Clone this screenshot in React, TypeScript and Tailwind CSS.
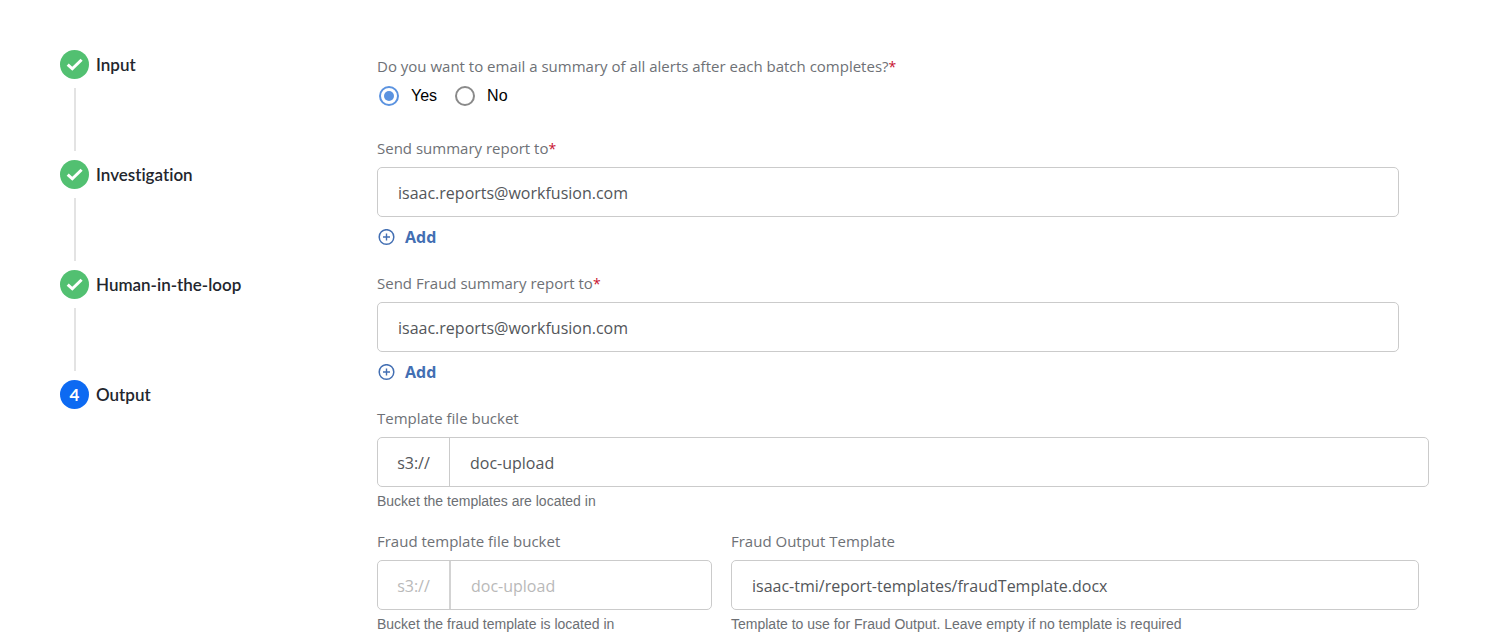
import { useState } from "react";

const STEPS = [
  { label: "Input", done: true },
  { label: "Investigation", done: true },
  { label: "Human-in-the-loop", done: true },
  { label: "Output", done: false },
];

const LABEL = "block text-[15px] leading-[22px] text-[#6e7176]";
const HELP = "mt-1 font-['Liberation_Sans',sans-serif] text-sm leading-5 text-[#6c6f74]";
const BOXED_INPUT =
  "mt-2 block h-[50px] w-full rounded-[5px] border border-[#cbcbcb] px-5 pt-[2px] text-base text-[#53565a] outline-none";
const BARE_INPUT =
  "h-full w-full min-w-0 bg-transparent px-5 pt-[2px] text-base text-[#53565a] outline-none placeholder:text-[#b9b9b9]";

function StepMarker({ done, number }: { done: boolean; number: number }) {
  if (!done) {
    return (
      <span className="flex size-[29px] items-center justify-center rounded-full bg-[#0d6af2] text-[17px] font-bold text-white">
        {number}
      </span>
    );
  }
  return (
    <span className="flex size-[29px] items-center justify-center rounded-full bg-[#52c071]">
      <svg width="29" height="29" viewBox="0 0 29 29" fill="none" aria-hidden="true">
        <path d="M7.7 14.6 L12.3 18.8 L21.6 9.7" stroke="#fff" strokeWidth="3" />
      </svg>
    </span>
  );
}

function Stepper() {
  return (
    <nav aria-label="Steps" className="w-[317px] shrink-0 font-[Lato,sans-serif]">
      <ol>
        {STEPS.map((step, i) => (
          <li key={step.label}>
            <div className="flex items-center gap-[7px]">
              <StepMarker done={step.done} number={i + 1} />
              <span className="pt-px text-[17px] leading-6 font-semibold text-[#23262d] [font-variant-ligatures:none]">
                {step.label}
              </span>
            </div>
            {i < STEPS.length - 1 && <div className="my-[9px] ml-[14px] h-[63px] w-[2px] bg-[#e3e3e3]" />}
          </li>
        ))}
      </ol>
    </nav>
  );
}

function Required() {
  return <span className="text-sm leading-none text-[#c8102e]">*</span>;
}

function EmailField({ id, label }: { id: string; label: string }) {
  return (
    <div className="mb-[23px] pr-[30px]">
      <label htmlFor={id} className={LABEL}>
        {label}
        <Required />
      </label>
      <input id={id} type="email" defaultValue="isaac.reports@workfusion.com" className={BOXED_INPUT} />
      <button type="button" className="mt-2 flex h-6 items-center gap-[10px] pl-px text-base font-bold text-[#436fb3]">
        <svg width="17" height="17" viewBox="0 0 17 17" fill="none" stroke="currentColor" aria-hidden="true">
          <circle cx="8.5" cy="8" r="7.3" strokeWidth="1.5" />
          <path d="M8.5 4.5v7M5 8h7" strokeWidth="1.4" />
        </svg>
        Add
      </button>
    </div>
  );
}

type BucketFieldProps = {
  id: string;
  label: string;
  help: string;
  value?: string;
  placeholder?: string;
};

function BucketField({ id, label, help, value, placeholder }: BucketFieldProps) {
  return (
    <>
      <label htmlFor={id} className={LABEL}>
        {label}
      </label>
      <div className="mt-2 flex h-[50px] items-center rounded-[5px] border border-[#cbcbcb]">
        <span
          className={
            value
              ? "flex h-full w-[72px] shrink-0 items-center justify-center border-r border-[#cbcbcb] pt-[2px] text-base text-[#53565a]"
              : "flex h-full w-[73px] shrink-0 items-center justify-center border-r-2 border-[#d3d3d3] pt-[2px] text-base text-[#b9b9b9]"
          }
        >
          s3://
        </span>
        <input id={id} type="text" defaultValue={value} placeholder={placeholder} className={BARE_INPUT} />
      </div>
      <p className={HELP}>{help}</p>
    </>
  );
}

function EmailChoice() {
  const [choice, setChoice] = useState("Yes");
  return (
    <fieldset className="mb-[29px]">
      <legend className={LABEL}>
        Do you want to email a summary of all alerts after each batch completes?
        <Required />
      </legend>
      <div className="mt-[7px] flex gap-[18px] pl-[2px] font-['Liberation_Sans',sans-serif] text-base leading-6 text-black">
        {["Yes", "No"].map((option) => (
          <label key={option} className="flex items-center gap-3">
            <input
              type="radio"
              name="email-summary"
              value={option}
              checked={choice === option}
              onChange={() => setChoice(option)}
              className="grid size-5 appearance-none place-content-center rounded-full border-2 border-[#8a8a8a] before:size-[10px] before:rounded-full before:bg-transparent checked:border-[#5b93e0] checked:before:bg-[#5b93e0]"
            />
            {option}
          </label>
        ))}
      </div>
    </fieldset>
  );
}

export default function App() {
  return (
    <main className="flex min-h-screen bg-white pr-[73px] pl-[60px] font-['Open_Sans',sans-serif]">
      <div className="pt-[50px]">
        <Stepper />
      </div>
      <form className="min-w-0 flex-1 pt-[55px]">
        <EmailChoice />
        <EmailField id="summary-to" label="Send summary report to" />
        <EmailField id="fraud-summary-to" label="Send Fraud summary report to" />
        <div className="mb-[19px]">
          <BucketField
            id="bucket"
            label="Template file bucket"
            value="doc-upload"
            help="Bucket the templates are located in"
          />
        </div>
        <div className="-mr-[10px] flex">
          <div className="w-1/3 pr-[19px]">
            <BucketField
              id="fraud-bucket"
              label="Fraud template file bucket"
              placeholder="doc-upload"
              help="Bucket the fraud template is located in"
            />
          </div>
          <div className="w-2/3 pr-5">
            <label htmlFor="fraud-template" className={LABEL}>
              Fraud Output Template
            </label>
            <input
              id="fraud-template"
              type="text"
              defaultValue="isaac-tmi/report-templates/fraudTemplate.docx"
              className={BOXED_INPUT}
            />
            <p className={HELP}>Template to use for Fraud Output. Leave empty if no template is required</p>
          </div>
        </div>
      </form>
    </main>
  );
}
